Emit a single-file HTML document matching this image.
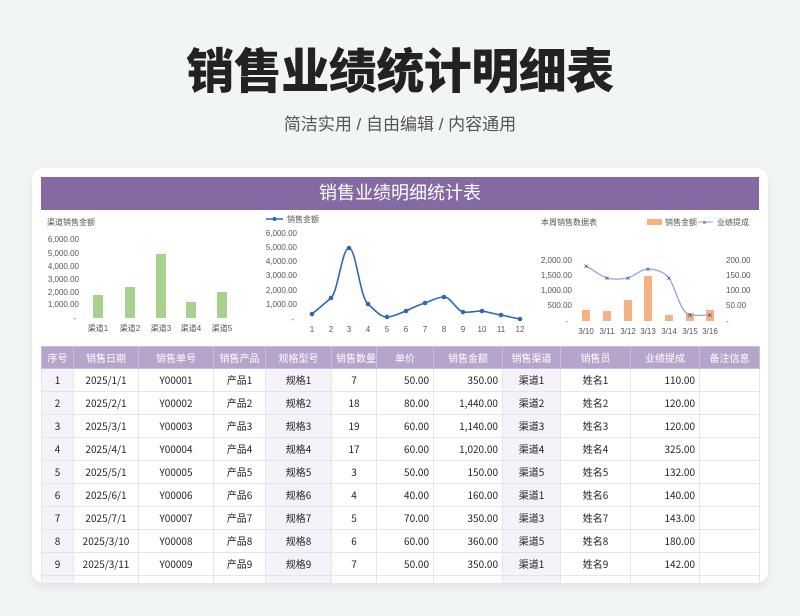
<!DOCTYPE html>
<html><head><meta charset="utf-8"><style>
*{margin:0;padding:0;box-sizing:border-box}
body{width:800px;height:616px;background:#f1f5f6;font-family:"Liberation Sans","Noto Sans CJK SC",sans-serif;position:relative;overflow:hidden}
h1{position:absolute;left:0;width:800px;top:37px;text-align:center;font-size:48px;font-weight:900;color:#222;letter-spacing:-0.5px;line-height:60px;font-family:"Noto Sans CJK SC",sans-serif}
.sub{position:absolute;left:0;width:800px;top:113px;text-align:center;font-size:17px;color:#555;line-height:24px}
.card{position:absolute;left:32px;top:168px;width:736px;height:415px;background:#fff;border-radius:12px;box-shadow:0 4px 10px rgba(0,0,0,.08);overflow:hidden}
.band{position:absolute;left:9px;top:9px;width:718px;height:33px;background:#8469a3;color:#fff;font-size:18px;text-align:center;line-height:33px}
svg{position:absolute;left:0;top:0}
table{position:absolute;left:9px;top:178px;width:718px;table-layout:fixed;border-collapse:collapse;font-size:10px;color:#222;font-family:"Noto Sans CJK SC",sans-serif}
td,th{height:23px;line-height:14px;border:1px solid #e6e2ee;text-align:center;padding:0 4px;white-space:nowrap;vertical-align:middle;overflow:hidden}
th{background:#b6a4cb;color:#fff;font-weight:normal;height:22px;border-color:#c9bddb}
td.r{text-align:right}
td.s{background:#f5f2f9}
td.b{border-left:1px solid #c8bcdb}
</style></head><body>
<h1>销售业绩统计明细表</h1>
<div class="sub">简洁实用 / 自由编辑 / 内容通用</div>
<div class="card">
<div class="band">销售业绩明细统计表</div>
<svg width="736" height="180" viewBox="32 168 736 180" font-family="Liberation Sans,Noto Sans CJK SC,sans-serif" font-size="8" fill="#555">
<text x="47" y="225">渠道销售金额</text>
<g text-anchor="end"><text x="79" y="242">6,000.00</text><text x="79" y="256">5,000.00</text><text x="79" y="269">4,000.00</text><text x="79" y="282">3,000.00</text><text x="79" y="295">2,000.00</text><text x="79" y="307">1,000.00</text><text x="76" y="321">-</text></g>
<g fill="#a9d18e"><rect x="93" y="295" width="10" height="23"/><rect x="125" y="287" width="10" height="31"/><rect x="156" y="254" width="10" height="64"/><rect x="186" y="302" width="10" height="16"/><rect x="217" y="292" width="10" height="26"/></g>
<g text-anchor="middle"><text x="98" y="331">渠道1</text><text x="130" y="331">渠道2</text><text x="161" y="331">渠道3</text><text x="191" y="331">渠道4</text><text x="222" y="331">渠道5</text></g>
<line x1="266" y1="219" x2="283" y2="219" stroke="#2e6aab" stroke-width="1.5"/><circle cx="274.5" cy="219" r="2" fill="#2e6aab"/>
<text x="287" y="222">销售金额</text>
<g text-anchor="end"><text x="297" y="236">6,000.00</text><text x="297" y="250">5,000.00</text><text x="297" y="264">4,000.00</text><text x="297" y="278">3,000.00</text><text x="297" y="293">2,000.00</text><text x="297" y="307">1,000.00</text><text x="294" y="322">-</text></g>
<path d="M312 314 C318 309,324 304,331 298 C338 292,342 248,349 248 C356 248,360 298,368 304 C375 310,380 317,387 317 C393 317,400 313,406 311 C412 308,418 305,425 303 C431 301,437 297,444 297 C451 297,456 310,463 312 C469 313,475 311,482 311 C488 312,494 314,501 315 C507 316,513 318,520 319" fill="none" stroke="#2e6aab" stroke-width="1.6"/>
<g fill="#2e6aab"><circle cx="312" cy="314" r="2.3"/><circle cx="331" cy="298" r="2.3"/><circle cx="349" cy="248" r="2.3"/><circle cx="368" cy="304" r="2.3"/><circle cx="387" cy="317" r="2.3"/><circle cx="406" cy="311" r="2.3"/><circle cx="425" cy="303" r="2.3"/><circle cx="444" cy="297" r="2.3"/><circle cx="463" cy="312" r="2.3"/><circle cx="482" cy="311" r="2.3"/><circle cx="501" cy="315" r="2.3"/><circle cx="520" cy="319" r="2.3"/></g>
<g text-anchor="middle"><text x="312" y="332">1</text><text x="331" y="332">2</text><text x="349" y="332">3</text><text x="368" y="332">4</text><text x="387" y="332">5</text><text x="406" y="332">6</text><text x="425" y="332">7</text><text x="444" y="332">8</text><text x="463" y="332">9</text><text x="482" y="332">10</text><text x="501" y="332">11</text><text x="520" y="332">12</text></g>
<text x="541" y="225">本周销售数据表</text>
<rect x="647" y="219" width="15" height="6" fill="#f4b183"/><text x="665" y="225">销售金额</text>
<line x1="698" y1="222" x2="713" y2="222" stroke="#8fa7d9"/><text x="702.5" y="225" fill="#2f3f7a" font-size="7">×</text><text x="717" y="225">业绩提成</text>
<g text-anchor="end"><text x="572" y="263">2,000.00</text><text x="572" y="278">1,500.00</text><text x="572" y="293">1,000.00</text><text x="572" y="308">500.00</text><text x="568" y="324">-</text></g>
<g><text x="726" y="263">200.00</text><text x="726" y="278">150.00</text><text x="726" y="293">100.00</text><text x="726" y="308">50.00</text><text x="726" y="324">-</text></g>
<g fill="#f4b183"><rect x="582" y="310" width="8" height="11"/><rect x="603" y="311" width="8" height="10"/><rect x="624" y="300" width="8" height="21"/><rect x="644" y="276" width="8" height="45"/><rect x="665" y="315" width="8" height="6"/><rect x="686" y="313" width="8" height="8"/><rect x="706" y="310" width="8" height="11"/></g>
<path d="M586 266 C594 270,600 276,607 278 C614 280,621 279,628 278 C635 276,641 269,648 269 C656 269,664 272,669 278 C676 288,680 313,690 315 C697 316,703 315,710 315" fill="none" stroke="#8fa7d9" stroke-width="1.3"/>
<g fill="#2f3f7a" font-size="8" text-anchor="middle"><text x="586" y="269">×</text><text x="607" y="281">×</text><text x="628" y="281">×</text><text x="648" y="272">×</text><text x="669" y="281">×</text><text x="690" y="318">×</text><text x="710" y="318">×</text></g>
<g text-anchor="middle"><text x="586" y="334">3/10</text><text x="607" y="334">3/11</text><text x="628" y="334">3/12</text><text x="648" y="334">3/13</text><text x="669" y="334">3/14</text><text x="690" y="334">3/15</text><text x="710" y="334">3/16</text></g>
</svg>
<table>
<colgroup><col style="width:32px"><col style="width:65px"><col style="width:75px"><col style="width:52px"><col style="width:66px"><col style="width:45px"><col style="width:57px"><col style="width:69px"><col style="width:58px"><col style="width:70px"><col style="width:69px"><col style="width:60px"></colgroup>
<tr><th>序号</th><th>销售日期</th><th>销售单号</th><th>销售产品</th><th>规格型号</th><th>销售数量</th><th>单价</th><th>销售金额</th><th>销售渠道</th><th>销售员</th><th>业绩提成</th><th>备注信息</th></tr>
<tr><td class="s">1</td><td>2025/1/1</td><td>Y00001</td><td>产品1</td><td class="s b">规格1</td><td>7</td><td class="r b">50.00</td><td class="r">350.00</td><td class="s b">渠道1</td><td>姓名1</td><td class="r b">110.00</td><td></td></tr>
<tr><td class="s">2</td><td>2025/2/1</td><td>Y00002</td><td>产品2</td><td class="s b">规格2</td><td>18</td><td class="r b">80.00</td><td class="r">1,440.00</td><td class="s b">渠道2</td><td>姓名2</td><td class="r b">120.00</td><td></td></tr>
<tr><td class="s">3</td><td>2025/3/1</td><td>Y00003</td><td>产品3</td><td class="s b">规格3</td><td>19</td><td class="r b">60.00</td><td class="r">1,140.00</td><td class="s b">渠道3</td><td>姓名3</td><td class="r b">120.00</td><td></td></tr>
<tr><td class="s">4</td><td>2025/4/1</td><td>Y00004</td><td>产品4</td><td class="s b">规格4</td><td>17</td><td class="r b">60.00</td><td class="r">1,020.00</td><td class="s b">渠道4</td><td>姓名4</td><td class="r b">325.00</td><td></td></tr>
<tr><td class="s">5</td><td>2025/5/1</td><td>Y00005</td><td>产品5</td><td class="s b">规格5</td><td>3</td><td class="r b">50.00</td><td class="r">150.00</td><td class="s b">渠道5</td><td>姓名5</td><td class="r b">132.00</td><td></td></tr>
<tr><td class="s">6</td><td>2025/6/1</td><td>Y00006</td><td>产品6</td><td class="s b">规格6</td><td>4</td><td class="r b">40.00</td><td class="r">160.00</td><td class="s b">渠道1</td><td>姓名6</td><td class="r b">140.00</td><td></td></tr>
<tr><td class="s">7</td><td>2025/7/1</td><td>Y00007</td><td>产品7</td><td class="s b">规格7</td><td>5</td><td class="r b">70.00</td><td class="r">350.00</td><td class="s b">渠道3</td><td>姓名7</td><td class="r b">143.00</td><td></td></tr>
<tr><td class="s">8</td><td>2025/3/10</td><td>Y00008</td><td>产品8</td><td class="s b">规格8</td><td>6</td><td class="r b">60.00</td><td class="r">360.00</td><td class="s b">渠道5</td><td>姓名8</td><td class="r b">180.00</td><td></td></tr>
<tr><td class="s">9</td><td>2025/3/11</td><td>Y00009</td><td>产品9</td><td class="s b">规格9</td><td>7</td><td class="r b">50.00</td><td class="r">350.00</td><td class="s b">渠道1</td><td>姓名9</td><td class="r b">142.00</td><td></td></tr>
<tr><td class="s"></td><td></td><td></td><td></td><td class="s b"></td><td></td><td class="b"></td><td></td><td class="s b"></td><td></td><td class="b"></td><td></td></tr>
</table>
</div>
</body></html>
